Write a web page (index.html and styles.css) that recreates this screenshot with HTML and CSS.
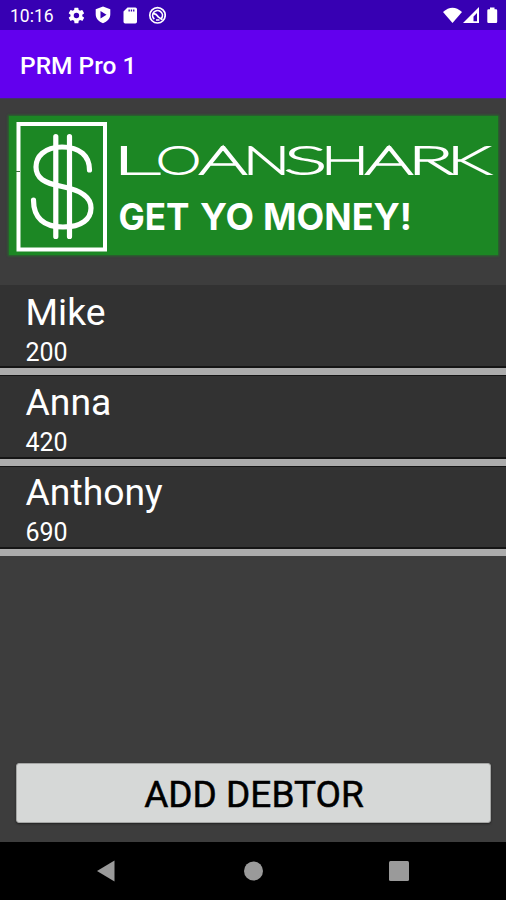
FILE: index.html
```html
<!DOCTYPE html>
<html lang="en">
<head>
<meta charset="utf-8">
<title>PRM Pro 1</title>
<link rel="stylesheet" href="styles.css">
</head>
<body>
<div class="statusbar">
  <span class="clock">10:16</span>
  <svg class="status-left" viewBox="0 0 100 20" width="100" height="20">
    <g fill="#fff">
      <path transform="translate(.6 .6) scale(.82)" d="M19.1 12.9a7 7 0 0 0 0-1.8l2-1.6a.5.5 0 0 0 .1-.6l-1.9-3.3a.5.5 0 0 0-.6-.2l-2.4 1a7 7 0 0 0-1.6-1L14.300 2.900a.5.5 0 0 0-.5-.4h-3.800a.5.5 0 0 0-.5.4L9.200 5.400a7 7 0 0 0-1.600 1L5.200 5.400a.5.5 0 0 0-.6.2L2.700 8.900a.5.5 0 0 0 .1.6l2 1.600a7 7 0 0 0 0 1.800l-2 1.600a.5.5 0 0 0-.1.6l1.900 3.300c.1.2.4.3.6.2l2.400-1a7 7 0 0 0 1.600 1l.4 2.500c0 .3.2.4.5.4h3.800c.3 0 .5-.2.5-.4l.4-2.500a7 7 0 0 0 1.600-1l2.400 1c.2.1.5 0 .6-.2l1.900-3.300a.5.5 0 0 0-.1-.6zM12 15.300a3.300 3.300 0 1 1 0-6.600 3.300 3.300 0 0 1 0 6.600z"/>
      <path fill-rule="evenodd" d="M37 1.500l7.300 2.700v5c0 4.400-3 7.400-7.300 9-4.300-1.600-7.300-4.600-7.300-9v-5zM34.500 6v7.600l6-3.800z"/>
      <path fill-rule="evenodd" d="M61.500 2.500h7.800q1.700 0 1.700 1.700v12.600q0 1.700-1.700 1.700h-10.100q-1.700 0-1.700-1.700V6.500zM62.500 4.500v2h1.300v-2zm2.300 0v2h1.300v-2zm2.300 0v2h1.300v-2z"/>
    </g>
    <g fill="none" stroke="#fff">
      <circle cx="91.500" cy="10.300" r="7.700" stroke-width="1.700"/>
      <path stroke-width="1.700" d="M88.300 14.100a4.900 4.900 0 1 1 7.200-.8M87.500 9c3-1 3.500 2 5 3.200s2 1.300 4 2.500M90 15h3.500"/>
    </g>
  </svg>
  <svg class="status-right" viewBox="0 0 56 20" width="56" height="20" fill="#fff">
    <path d="M0 7Q9.500-1.500 19 7L9.500 18z"/>
    <path fill-rule="evenodd" d="M36 2v16H20zM34 8l-3.500 3.500v4.700H34z"/>
    <path d="M47 2.500h4.500v1.800H53q1.200 0 1.200 1.200v11.300q0 1.200-1.200 1.200h-7.500q-1.200 0-1.200-1.200V5.500q0-1.200 1.200-1.200H47z"/>
  </svg>
</div>
<header class="appbar"><h1>PRM Pro 1</h1></header>
<main>
  <svg class="banner" viewBox="9 116 489 139" width="489" height="139">
    <rect x="18.500" y="124" width="86.500" height="125.500" fill="none" stroke="#fff" stroke-width="4"/>
    <g fill="none" stroke="#fff" stroke-width="5.200" stroke-linecap="round">
      <path d="M55.800 136.500V236.500M69.500 136.500V236.500"/>
      <path d="M89.500 170C89.500 156 80 147 62 147S36 157 36 167C36 178 44 183 62 186.500S91 196 91 208C91 219 82 227 63 227S33.500 218 33.500 200"/>
    </g>
    <path d="M16 171.500h4" stroke="#3c6a3c"/>
    <text class="brand" y="174"><tspan x="112.500" textLength="47" lengthAdjust="spacingAndGlyphs">L</tspan><tspan x="156" textLength="45" lengthAdjust="spacingAndGlyphs">O</tspan><tspan x="199.500" textLength="47" lengthAdjust="spacingAndGlyphs">A</tspan><tspan x="243" textLength="47" lengthAdjust="spacingAndGlyphs">N</tspan><tspan x="284" textLength="43" lengthAdjust="spacingAndGlyphs">S</tspan><tspan x="321" textLength="48" lengthAdjust="spacingAndGlyphs">H</tspan><tspan x="365.500" textLength="47" lengthAdjust="spacingAndGlyphs">A</tspan><tspan x="408" textLength="45" lengthAdjust="spacingAndGlyphs">R</tspan><tspan x="447" textLength="43" lengthAdjust="spacingAndGlyphs">K</tspan></text>
    <text class="slogan" y="230"><tspan x="118.500" textLength="71" lengthAdjust="spacingAndGlyphs">GET</tspan> <tspan x="200" textLength="54" lengthAdjust="spacingAndGlyphs">YO</tspan> <tspan x="263" textLength="149" lengthAdjust="spacingAndGlyphs">MONEY!</tspan></text>
  </svg>
  <ul class="debtors">
    <li><span class="name">Mike</span><span class="amount">200</span></li>
    <li><span class="name">Anna</span><span class="amount">420</span></li>
    <li><span class="name">Anthony</span><span class="amount">690</span></li>
  </ul>
  <button class="add" type="button">ADD DEBTOR</button>
</main>
<nav class="navbar">
  <svg viewBox="0 0 20 22" width="20" height="22"><path d="M1 11L18.500.5v21z"/></svg>
  <svg viewBox="0 0 20 22" width="20" height="22"><circle cx="10.500" cy="11" r="9.500"/></svg>
  <svg viewBox="0 0 20 22" width="20" height="22"><rect y="1" width="20" height="20" rx="1.500"/></svg>
</nav>
</body>
</html>
```
FILE: styles.css
```css
* { box-sizing: border-box; }
body {
  margin: 0;
  width: 506px;
  height: 900px;
  display: flex;
  flex-direction: column;
  font-family: Roboto, "Liberation Sans", sans-serif;
  color: #fff;
  background: #3d3d3d;
  overflow: hidden;
}
.statusbar {
  height: 30px;
  flex: none;
  display: flex;
  align-items: center;
  background: #3700b3;
  padding: 0 7px 0 10px;
}
.clock { width: 56px; font-size: 17.500px; line-height: 28px; padding-top: 2px; }
.status-right { margin-left: auto; }
.appbar {
  height: 69px;
  flex: none;
  display: flex;
  align-items: center;
  padding: 3px 20px 0;
  background: #6200ee;
  border-bottom: 1px solid #41316a;
}
h1 { margin: 0; font-size: 24.500px; font-weight: 500; line-height: 32px; }
main {
  flex: 1;
  display: flex;
  flex-direction: column;
  padding-top: 17px;
}
.banner {
  flex: none;
  margin-left: 9px;
  background: #1c8724;
  box-shadow: 0 0 2px 1px #246d29;
}
.banner text { fill: #fff; font-family: Inter, sans-serif; }
.banner .brand { font-family: Lato, sans-serif; font-size: 38px; font-weight: 100; stroke: #fff; stroke-width: 2px; }
.slogan { font-size: 37px; font-weight: 700; }
.debtors { list-style: none; margin: 30px 0 0; padding: 0; }
.debtors li {
  height: 90.500px;
  display: flex;
  flex-direction: column;
  padding: 4.500px 25.500px 0;
  background: #323232;
  border-bottom: 7px solid #acacac;
  box-shadow: inset 0 -2px #151515;
}
.debtors li:first-child { height: 90px; }
.debtors li + li { box-shadow: inset 0 -2px #151515, inset 0 1px #151515; }
.name { font-size: 37.300px; line-height: 45px; }
.amount { font-size: 25px; line-height: 36px; }
.add {
  height: 60px;
  margin: auto 15px 19px 16px;
  padding: 3px 0 0 1px;
  border: 1px solid #a5a6a5;
  border-radius: 3px;
  background: #d6d8d7;
  box-shadow: 0 1px 2px #222;
  color: #000;
  font: 400 37px/55px Roboto, sans-serif;
  -webkit-text-stroke: .5px #000;
}
.navbar {
  height: 58px;
  flex: none;
  display: flex;
  justify-content: space-between;
  align-items: center;
  padding: 0 97px 0 96px;
  background: #000;
  fill: #9a9a9a;
}
```
